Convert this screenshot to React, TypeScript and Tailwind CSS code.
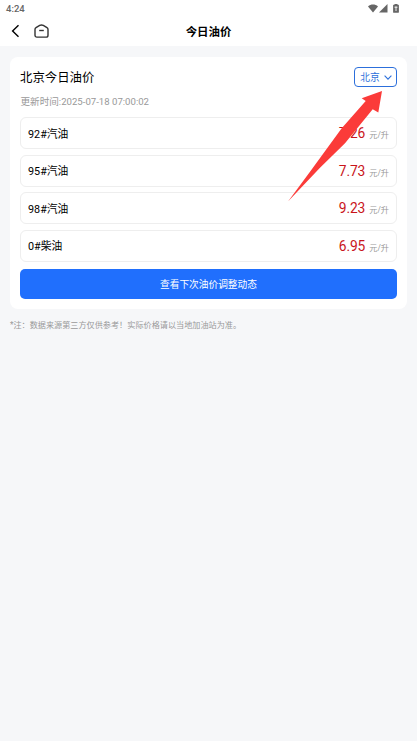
import React from "react";

interface Price {
  name: string;
  value: string;
}

const prices: Price[] = [
  { name: "92#汽油", value: "7.26" },
  { name: "95#汽油", value: "7.73" },
  { name: "98#汽油", value: "9.23" },
  { name: "0#柴油", value: "6.95" },
];

const StatusBar: React.FC = () => (
  <div className="flex h-4 items-center justify-between pl-[6px] pr-[18px] text-[#666]">
    <span className="pt-[2px] text-[9.5px] leading-none font-medium">4:24</span>
    <div className="flex items-center">
      <svg width="10" height="9" viewBox="0 0 10 9" fill="currentColor">
        <path d="M0 2.4C2.8-.2 7.2-.2 10 2.4L5 8.6z" />
      </svg>
      <svg className="ml-[1px]" width="9" height="9" viewBox="0 0 9 9" fill="currentColor">
        <path d="M8.5 0v8.5H0z" />
      </svg>
      <svg className="ml-[5px]" width="6" height="9" viewBox="0 0 6 9">
        <path d="M1.500 0h3v.8h.9c.3 0 .5.2.5.5v7c0 .3-.2.5-.5.5H.6a.5.5 0 0 1-.5-.5v-7c0-.3.2-.5.5-.5h.9z" fill="currentColor" />
        <path d="M3 2.500v4.500M1.500 3.200h3" stroke="#fff" strokeWidth=".9" fill="none" />
      </svg>
    </div>
  </div>
);

const NavBar: React.FC = () => (
  <div className="grid h-[30px] grid-cols-3 items-center text-black">
    <div className="flex items-center pl-[11px]">
      <svg width="9" height="14" viewBox="0 0 9 14" fill="none" stroke="currentColor" strokeWidth="1.4">
        <path d="M7.5 1.2 1.6 7l5.9 5.8" />
      </svg>
      <svg className="ml-[14px]" width="15" height="14" viewBox="0 0 15 14" fill="none" stroke="#333" strokeWidth="1.4">
        <path d="M1 5.4c0-.8.3-1.300 1-1.700L5.700 1.400c1.200-.6 2.400-.6 3.600 0L13 3.700c.7.4 1 .9 1 1.700v5.800c0 1.200-.7 1.900-1.900 1.900H2.900C1.700 13.100 1 12.400 1 11.200z" />
        <path d="M5.200 6.500h4.600" />
      </svg>
    </div>
    <h1 className="pt-[3px] text-center text-[11.4px] leading-none font-bold">今日油价</h1>
  </div>
);

const PriceRow: React.FC<Price> = ({ name, value }) => (
  <div className="flex h-8 items-center justify-between rounded-[6px] border border-[#eeeeee] px-[7px] pt-[2px]">
    <span className="pt-[2px] text-[10.8px] leading-none text-black">{name}</span>
    <span className="flex items-baseline gap-[4px] leading-none">
      <span className="text-[13.8px] tracking-[-0.1px] text-[#c9151b]">{value}</span>
      <span className="text-[8.2px] text-[#999]">元/升</span>
    </span>
  </div>
);

export default function App() {
  return (
    <div className="relative min-h-screen bg-[#f6f7f9] font-[Roboto,'Noto_Sans_CJK_SC',sans-serif]">
      <header className="bg-white">
        <StatusBar />
        <NavBar />
      </header>

      <main className="px-[10px] pt-[11px]">
        <section className="h-[252px] rounded-[8px] bg-white px-[10px] pt-[10px]">
          <div className="flex h-5 items-center justify-between">
            <h2 className="pt-[3px] text-[12.4px] leading-none text-black">北京今日油价</h2>
            <button className="flex h-5 w-[43px] items-center justify-center gap-[4px] rounded-[4px] border border-[#2c6fdb] pl-px text-[#2c6fdb]">
              <span className="pt-[2px] text-[9.7px] leading-none">北京</span>
              <svg width="8" height="5" viewBox="0 0 8 5" fill="none" stroke="currentColor" strokeWidth="1.1">
                <path d="m.6.7 3.400 3.400L7.400.7" />
              </svg>
            </button>
          </div>
          <p className="mt-[10px] pl-[0.5px] text-[9.6px] leading-[10px] text-[#999]">更新时间:2025-07-18 07:00:02</p>
          <div className="mt-[10px] flex flex-col gap-[5.5px]">
            {prices.map((p) => (
              <PriceRow key={p.name} name={p.name} value={p.value} />
            ))}
          </div>
          <button className="mt-[7px] flex h-[30px] w-full items-center justify-center rounded-[5px] bg-[#206ffd] pt-[2px] text-[9.7px] leading-none text-white">
            查看下次油价调整动态
          </button>
        </section>
        <p className="mt-[11px] text-[8.15px] leading-[10px] text-[#999]">
          *注：数据来源第三方仅供参考！实际价格请以当地加油站为准。
        </p>
      </main>

      {/* pointer to the city selector */}
      <svg className="absolute top-[90px] left-[287px]" width="97" height="113" viewBox="0 0 97 113" fill="#fb3b39">
        <path d="M1 111.500 23 81.700 54.700 38.300 78.700 11 74.700 8.300 95 1 91.300 22.500 85.700 19.300 58 53.300 33 77.700z" />
      </svg>
    </div>
  );
}
